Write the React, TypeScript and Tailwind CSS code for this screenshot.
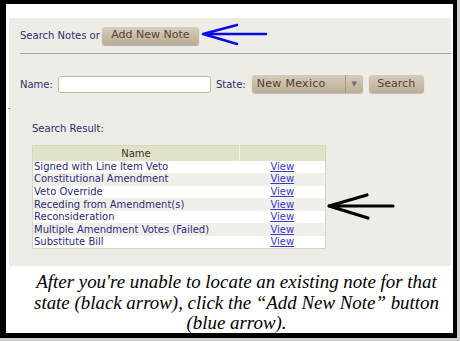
import React from "react"

const rows = [
  "Signed with Line Item Veto",
  "Constitutional Amendment",
  "Veto Override",
  "Receding from Amendment(s)",
  "Reconsideration",
  "Multiple Amendment Votes (Failed)",
  "Substitute Bill",
]

const ui = { fontFamily: '"DejaVu Sans", Verdana, sans-serif' }

export default function App() {
  return (
    <div className="w-[460px] h-[341px] bg-[#cfcfcf]">
      <div className="relative w-[457px] h-[338px] bg-white border-black border-l-[6px] border-t-[4px] border-r-[4px] border-b-[5px]">
        <div className="ml-[3px] mt-[14px] mr-[2px] h-[248px] bg-[#edece6] pl-[11px] text-[10px] text-[#2e2e6e]" style={ui}>
          <div className="flex items-center h-[35px] pt-[6px] pb-[6px]">
            <span>Search Notes or</span>
            <button className="ml-[2px] h-[18px] w-[97px] rounded-[3px] bg-gradient-to-b from-[#d8cdbb] to-[#b9ab95] text-[11px] text-[#4f4536] shadow-[0_1px_1px_rgba(0,0,0,0.25)]">
              Add New Note
            </button>
          </div>
          <div className="h-px bg-[#a5a5a5]" />

          <div className="flex items-center mt-[21px] h-[18px]">
            <span>Name:</span>
            <div className="ml-[5px] w-[153px] h-[17px] bg-white border border-[#c7b897] rounded-[3px]" />
            <span className="ml-[5px]">State:</span>
            <div className="ml-[6px] flex w-[111px] h-[18px] rounded-[3px] bg-gradient-to-b from-[#d6cbb9] to-[#bcae98] text-[11px] text-[#4a4033] shadow-[0_1px_1px_rgba(0,0,0,0.2)]">
              <span className="flex-1 pl-[5px] leading-[18px] tracking-[0.3px]">New Mexico</span>
              <span className="w-[18px] border-l border-[#a89a84] flex items-center justify-center text-[7px] text-[#7a6e5e]">▼</span>
            </div>
            <button className="ml-[6px] w-[55px] h-[18px] rounded-[3px] bg-gradient-to-b from-[#d6cbb9] to-[#bcae98] text-[11px] text-[#4f4536] shadow-[0_1px_1px_rgba(0,0,0,0.2)]">
              Search
            </button>
          </div>

          <div className="ml-[12px] mt-[28px]">Search Result:</div>

          <table className="ml-[12px] mt-[9px] w-[294px] border border-[#d6d6bf] border-collapse text-[10px]">
            <thead>
              <tr className="bg-[#e2e2c8] h-[15px]">
                <th className="font-normal text-center text-[#333] w-[207px] border-r border-[#f4f4e6] leading-[13px]">Name</th>
                <th />
              </tr>
            </thead>
            <tbody>
              {rows.map((r, i) => (
                <tr key={r} className={i % 2 === 0 ? "bg-white h-[12.6px]" : "bg-[#f0efe9] h-[12.6px]"}>
                  <td className="pl-[1px] leading-[12px] text-[#2c2c7a] whitespace-nowrap">{r}</td>
                  <td className="text-center leading-[12px] text-[#3a3acc] underline">View</td>
                </tr>
              ))}
            </tbody>
          </table>
        </div>

        <span className="absolute left-[2px] top-[98px] text-[8px] text-[#555]">-</span>

        <div className="pt-[6px] pl-[14px] text-center text-[18.9px] leading-[20.5px] italic text-black" style={{ fontFamily: '"Liberation Serif", "Times New Roman", serif' }}>
          After you're unable to locate an existing note for that
          <br />
          state (black arrow), click the “Add New Note” button
          <br />
          (blue arrow).
        </div>

        <svg className="absolute left-0 top-0" width="447" height="329" viewBox="6 4 447 329">
          <path d="M203 34 L266 34 M203 34 L237 25 M203 34 L237 44" stroke="#0a0ae6" strokeWidth="2.6" fill="none" strokeLinecap="round" />
          <path d="M329 206 L393 206 M329 206 L367 195 M329 206 L368 218" stroke="#000" strokeWidth="3.2" fill="none" strokeLinecap="round" />
        </svg>
      </div>
    </div>
  )
}
